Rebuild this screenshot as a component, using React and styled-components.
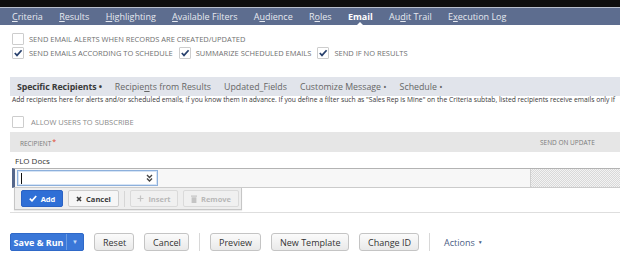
import React from 'react';
import styled, { createGlobalStyle, css } from 'styled-components';

const Global = createGlobalStyle`
  html, body { margin: 0; padding: 0; background: #fff; }
  body {
    font-family: "Open Sans", "Liberation Sans", sans-serif;
    width: 620px; height: 275px; overflow: hidden;
  }
  #root { width: 620px; overflow: hidden; }
`;

const Page = styled.div`
  width: 620px;
  overflow: hidden;
  white-space: nowrap;
`;

const TopStrip = styled.div`
  height: 7px;
  background: #0e0e0e;
`;

const NavBar = styled.nav`
  height: 17px;
  border-top: 1px solid #b9c0cd;
  background: #5d6d8f;
  display: flex;
  align-items: center;
  padding-left: 12px;
  gap: 16.3px;
`;

const NavTab = styled.span`
  position: relative;
  font-size: 9px;
  line-height: 17px;
  color: #e6e9f0;
  u { text-decoration: underline; text-underline-offset: 1px; }
  ${p => p.$active && css`
    font-weight: 700;
    color: #fff;
    &::after {
      content: '';
      position: absolute;
      left: 50%;
      bottom: 0;
      margin-left: -3px;
      border-left: 3px solid transparent;
      border-right: 3px solid transparent;
      border-bottom: 3px solid #fff;
    }
  `}
`;

const Options = styled.div`
  padding: 7px 0 0 12px;
`;

const OptionRow = styled.div`
  display: flex;
  align-items: center;
  height: 14px;
  gap: 6px;
`;

const Option = styled.label`
  display: flex;
  align-items: center;
  gap: 5px;
`;

const Box = styled.span`
  width: 10px;
  height: 10px;
  border: 1px solid #cdcdcd;
  border-radius: 1px;
  background: #fff;
  display: flex;
  align-items: center;
  justify-content: center;
  flex: none;
`;

const OptionText = styled.span`
  font-size: 7.5px;
  color: ${p => (p.$light ? '#8a8a8a' : '#707070')};
`;

const SubTabBar = styled.div`
  margin: 17px 0 0 10px;
  height: 19px;
  background: #e1e4eb;
  display: flex;
  align-items: center;
  padding-left: 7px;
  gap: 13px;
`;

const SubTab = styled.span`
  font-size: 8.8px;
  color: ${p => (p.$active ? '#3a3a3a' : '#666')};
  font-weight: ${p => (p.$active ? 700 : 400)};
  letter-spacing: ${p => (p.$active ? '-0.1px' : '0')};
  u { text-decoration: underline; text-underline-offset: 1px; }
`;

const Description = styled.div`
  margin-left: 12px;
  font-size: 6.72px;
  line-height: 8px;
  color: #3a3a3a;
`;

const SubscribeRow = styled.div`
  margin: 12px 0 0 12px;
  display: flex;
  align-items: center;
  gap: 7px;
  height: 11px;
`;

const Table = styled.div`
  margin: 5px 0 0 10px;
  width: 620px;
`;

const HeaderRow = styled.div`
  display: grid;
  grid-template-columns: 520px 100px;
  height: 20px;
  align-items: center;
  background: #e6e6e6;
`;

const HeaderCell = styled.span`
  font-size: 6.5px;
  color: #7a7a7a;
  padding-left: 10px;
`;

const Req = styled.sup`
  color: #e0452f;
  font-size: 7px;
  margin-left: 1px;
  vertical-align: 2px;
`;

const DataRow = styled.div`
  height: 16px;
  display: flex;
  align-items: center;
  padding-left: 5px;
  font-size: 8px;
  color: #333;
`;

const EditRow = styled.div`
  margin-left: 2px;
  height: 18px;
  display: grid;
  grid-template-columns: 515px 100px;
  border-top: 1px solid #b3b3b3;
  border-bottom: 1px solid #cbcbcb;
  border-left: 3px solid #55678b;
  background: #f7f7f7;
`;

const InputCell = styled.div`
  display: flex;
  align-items: center;
  padding-left: 2px;
`;

const Select = styled.div`
  width: 141px;
  height: 16px;
  box-sizing: border-box;
  border: 1px solid #8db0dc;
  box-shadow: inset 0 0 0 1px #d6e4f5;
  background: #fff;
  display: flex;
  align-items: center;
  justify-content: space-between;
  padding: 0 4px 0 3px;
`;

const Caret = styled.span`
  width: 1px;
  height: 11px;
  background: #111;
`;

const Hatch = styled.div`
  border-left: 1px solid #cfcfcf;
  background-color: #ececec;
  background-image: repeating-conic-gradient(#d9d9d9 0 25%, #f3f3f3 0 50%);
  background-size: 2px 2px;
`;

const ButtonBar = styled.div`
  margin-left: 4px;
  width: 228px;
  height: 22px;
  box-sizing: border-box;
  border: 1px solid #c6c6c6;
  border-top: none;
  background: #eeeeee;
  box-shadow: 0 1px 1px rgba(0,0,0,0.08);
  display: flex;
  align-items: center;
  padding-left: 6px;
  gap: 5px;
`;

const RowButton = styled.button`
  height: 17px;
  padding: 0 6px;
  display: flex;
  align-items: center;
  gap: 4px;
  font-family: inherit;
  font-size: 7.5px;
  font-weight: 700;
  border-radius: 2px;
  border: 1px solid ${p => (p.$primary ? '#2a62c4' : p.$disabled ? '#dadada' : '#cdcdcd')};
  background: ${p => (p.$primary ? '#2f6fd6' : p.$disabled ? '#f0f0f0' : '#f6f6f6')};
  color: ${p => (p.$primary ? '#fff' : p.$disabled ? '#b8b8b8' : '#3a3a3a')};
  width: ${p => p.$w}px;
  justify-content: center;
  cursor: default;
`;

const BarSep = styled.span`
  width: 1px;
  height: 16px;
  background: #d6d6d6;
`;

const Rule = styled.div`
  margin: 2px 0 0 10px;
  height: 1px;
  background: #dedede;
`;

const Footer = styled.div`
  margin-top: 20px;
  padding-left: 10px;
  display: flex;
  align-items: center;
  gap: 10px;
`;

const SplitButton = styled.div`
  height: 18px;
  display: flex;
  border: 1px solid #2f69c8;
  border-radius: 2px;
  background: #3a77d8;
  box-sizing: border-box;
  width: 74px;
`;

const SplitMain = styled.span`
  flex: 1;
  display: flex;
  align-items: center;
  justify-content: center;
  font-size: 9px;
  font-weight: 700;
  color: #fff;
`;

const SplitArrow = styled.span`
  width: 16px;
  border-left: 1px solid #6b9be2;
  display: flex;
  align-items: center;
  justify-content: center;
  font-size: 6px;
  color: #c4d8f7;
`;

const Button = styled.button`
  height: 18px;
  box-sizing: border-box;
  padding: 0 8px;
  border: 1px solid #c4c4c4;
  border-radius: 3px;
  background: linear-gradient(#fbfbfb, #e9e9e9);
  font-family: inherit;
  font-size: 9px;
  color: #333;
  width: ${p => p.$w}px;
  cursor: default;
`;

const Sep = styled.span`
  width: 1px;
  height: 18px;
  background: #d8d8d8;
`;

const Actions = styled.span`
  margin-left: 4px;
  font-size: 9px;
  color: #4a5d84;
  display: flex;
  align-items: center;
  gap: 3px;
`;

const ActionsArrow = styled.span`
  font-size: 5px;
`;

const Check = () => (
  <svg width="10" height="10" viewBox="0 0 10 10">
    <polyline points="1.8,5 4,7.4 8.6,2.2" fill="none" stroke="#27406d" strokeWidth="1.7" />
  </svg>
);

const Checkbox = ({ checked }) => <Box>{checked && <Check />}</Box>;

const DoubleChevron = () => (
  <svg width="7" height="8" viewBox="0 0 7 8">
    <polyline points="1,1 3.5,3.5 6,1" fill="none" stroke="#444" strokeWidth="1.4" />
    <polyline points="1,4.5 3.5,7 6,4.5" fill="none" stroke="#444" strokeWidth="1.4" />
  </svg>
);

const WhiteCheck = () => (
  <svg width="8" height="7" viewBox="0 0 8 7">
    <polyline points="0.8,3.6 3,5.8 7.2,1" fill="none" stroke="#fff" strokeWidth="1.7" />
  </svg>
);

const XIcon = () => (
  <svg width="6" height="6" viewBox="0 0 6 6">
    <path d="M1 1 L5 5 M5 1 L1 5" stroke="#3a3a3a" strokeWidth="1.6" />
  </svg>
);

const PlusIcon = () => (
  <svg width="7" height="7" viewBox="0 0 7 7">
    <path d="M3.5 0.5 V6.5 M0.5 3.5 H6.5" stroke="#c4c4c4" strokeWidth="1.2" />
  </svg>
);

const TrashIcon = () => (
  <svg width="6" height="8" viewBox="0 0 6 8">
    <rect x="0" y="0.5" width="6" height="1.2" fill="#c4c4c4" />
    <rect x="0.6" y="2.3" width="4.8" height="5.7" fill="#c4c4c4" />
  </svg>
);

export default function App() {
  return (
    <Page>
      <Global />
      <TopStrip />
      <NavBar>
        <NavTab><u>C</u>riteria</NavTab>
        <NavTab><u>R</u>esults</NavTab>
        <NavTab><u>H</u>ighlighting</NavTab>
        <NavTab><u>A</u>vailable Filters</NavTab>
        <NavTab>A<u>u</u>dience</NavTab>
        <NavTab>R<u>o</u>les</NavTab>
        <NavTab $active>Email</NavTab>
        <NavTab>Au<u>d</u>it Trail</NavTab>
        <NavTab>E<u>x</u>ecution Log</NavTab>
      </NavBar>

      <Options>
        <OptionRow>
          <Option>
            <Checkbox />
            <OptionText>SEND EMAIL ALERTS WHEN RECORDS ARE CREATED/UPDATED</OptionText>
          </Option>
        </OptionRow>
        <OptionRow>
          <Option>
            <Checkbox checked />
            <OptionText>SEND EMAILS ACCORDING TO SCHEDULE</OptionText>
          </Option>
          <Option>
            <Checkbox checked />
            <OptionText>SUMMARIZE SCHEDULED EMAILS</OptionText>
          </Option>
          <Option>
            <Checkbox checked />
            <OptionText>SEND IF NO RESULTS</OptionText>
          </Option>
        </OptionRow>
      </Options>

      <SubTabBar>
        <SubTab $active>Specific Recipients •</SubTab>
        <SubTab>Recipie<u>n</u>ts from Results</SubTab>
        <SubTab>Updated_Fields</SubTab>
        <SubTab>Customize Message •</SubTab>
        <SubTab>Schedule •</SubTab>
      </SubTabBar>
      <Description>
        Add recipients here for alerts and/or scheduled emails, if you know them in advance. If you define a filter such as "Sales Rep is Mine" on the Criteria subtab, listed recipients receive emails only if
      </Description>

      <SubscribeRow>
        <Checkbox />
        <OptionText $light>ALLOW USERS TO SUBSCRIBE</OptionText>
      </SubscribeRow>

      <Table>
        <HeaderRow>
          <HeaderCell>RECIPIENT<Req>*</Req></HeaderCell>
          <HeaderCell>SEND ON UPDATE</HeaderCell>
        </HeaderRow>
        <DataRow>FLO Docs</DataRow>
        <EditRow>
          <InputCell>
            <Select>
              <Caret />
              <DoubleChevron />
            </Select>
          </InputCell>
          <Hatch />
        </EditRow>
        <ButtonBar>
          <RowButton $primary $w={42}><WhiteCheck />Add</RowButton>
          <RowButton $w={51}><XIcon />Cancel</RowButton>
          <BarSep />
          <RowButton $disabled $w={48}><PlusIcon />Insert</RowButton>
          <RowButton $disabled $w={56}><TrashIcon />Remove</RowButton>
        </ButtonBar>
      </Table>
      <Rule />

      <Footer>
        <SplitButton>
          <SplitMain>Save &amp; Run</SplitMain>
          <SplitArrow>▼</SplitArrow>
        </SplitButton>
        <Button $w={40}>Reset</Button>
        <Button $w={45}>Cancel</Button>
        <Sep />
        <Button $w={51}>Preview</Button>
        <Button $w={78}>New Template</Button>
        <Button $w={60}>Change ID</Button>
        <Sep />
        <Actions>Actions<ActionsArrow>▼</ActionsArrow></Actions>
      </Footer>
    </Page>
  );
}
